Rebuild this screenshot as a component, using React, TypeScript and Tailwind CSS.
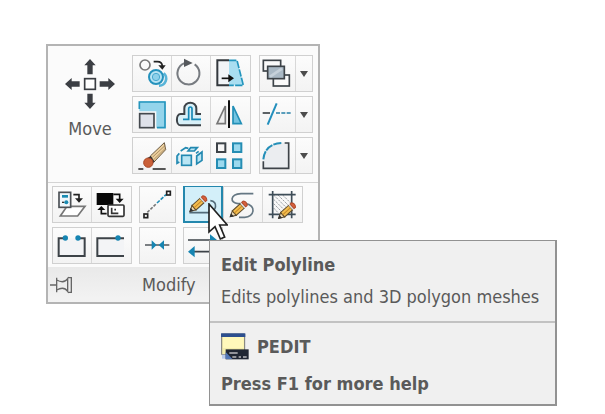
import React from 'react';

interface IconProps {
  children: React.ReactNode;
  narrow?: boolean;
}

// Tool glyphs are drawn on a 114x105 grid and shown at a third of that size.
const Glyph: React.FC<IconProps> = ({ children, narrow }) => (
  <svg
    viewBox={narrow ? '0 0 105 105' : '0 0 114 105'}
    className={narrow ? 'w-[35px] h-[35px] shrink-0' : 'w-[38px] h-[35px] shrink-0'}
    fill="none"
    stroke="#3d4348"
    strokeWidth="5"
    aria-hidden="true"
  >
    {children}
  </svg>
);

const Pencil: React.FC<{ x: number; y: number }> = ({ x, y }) => (
  <g transform={`translate(${x} ${y}) rotate(-42)`} stroke="#5d4a2c" strokeWidth="3">
    <path d="M0 0 16-9V9Z" fill="#f0dcb4" />
    <path d="M0 0 7-4V4Z" fill="#333" stroke="#333" />
    <path d="M16-9H48V9H16Z" fill="#f3bd4f" />
    <path d="M16 0H48" stroke="#c98a26" />
    <path d="M48-9H54V9H48Z" fill="#ddd" stroke="none" />
    <path d="M54-9H60Q67 0 60 9H54Z" fill="#d9603b" stroke="#b04a2c" />
  </g>
);

const MoveIcon = () => (
  <svg viewBox="0 0 150 150" className="w-[50px] h-[50px]" fill="#3b3e43" aria-hidden="true">
    <path d="M75 0 92 19H83V46H67V19H58Z" />
    <path d="M75 150 92 131H83V104H67V131H58Z" />
    <path d="M0 75 20 57V67H44V83H20V93Z" />
    <path d="M150 75 130 57V67H104V83H130V93Z" />
    <rect x="59" y="59" width="32" height="32" fill="#fff" stroke="#3b3e43" strokeWidth="5" />
  </svg>
);

const CopyIcon = () => (
  <Glyph>
    <circle cx="36" cy="27" r="15" stroke="#777" />
    <path d="M62 17H73Q88 17 88 32" stroke="#222" />
    <path d="M76 28H98L88 41Z" fill="#222" stroke="none" />
    <path d="M92 52A21 21 0 0 1 78 89" stroke="#58b4d8" strokeWidth="8" />
    <circle cx="69" cy="63" r="21" fill="#b9e4f4" stroke="#2592bd" strokeWidth="6" />
    <circle cx="69" cy="63" r="11" fill="#8dd0ea" stroke="#4aa9d0" strokeWidth="3" />
  </Glyph>
);

const RotateIcon = () => (
  <Glyph>
    <path d="M68 25A33 33 0 1 1 36 22L44 20" stroke="#777b80" strokeWidth="6" />
    <path d="M36 8 62 21 36 33Z" fill="#55585c" stroke="none" />
  </Glyph>
);

const StretchIcon = () => (
  <Glyph>
    <path d="M54 13H78L97 88H54Z" fill="#a9def1" stroke="none" />
    <path d="M54 13H78L97 88H54" stroke="#2395bd" strokeDasharray="22 4" />
    <path d="M54 13H19V88H54" fill="#f1f4f7" stroke="#33383d" strokeWidth="6" />
    <path d="M32 67H58" stroke="#111" />
    <path d="M52 55 69 67 52 79Z" fill="#111" stroke="none" />
  </Glyph>
);

const DrawOrderIcon = () => (
  <Glyph narrow>
    <rect x="10" y="13" width="52" height="32" fill="#fafafa" />
    <rect x="40" y="57" width="48" height="33" fill="#fafafa" />
    <rect x="23" y="31" width="50" height="37" fill="#aab9c5" />
    <path d="M30 62 66 38" stroke="#c6d1da" strokeWidth="8" />
  </Glyph>
);

const ScaleIcon = () => (
  <Glyph>
    <path d="M19 13H97V93H70V43H19Z" fill="#94d4eb" stroke="none" />
    <path d="M19 36V15H96V92H72" stroke="#2495bd" />
    <rect x="20" y="50" width="43" height="42" fill="#dfe2ea" stroke="#44494e" />
  </Glyph>
);

const OffsetIcon = () => (
  <Glyph>
    <path d="M87 51H73V34A18 17 0 0 0 37 34V51H26C11 51 11 85 26 85H87" fill="#d8f0f8" strokeWidth="6" />
    <path d="M87 67H60V36A5 6 0 0 0 50 36V67H33" stroke="#1688b5" />
  </Glyph>
);

const MirrorIcon = () => (
  <Glyph>
    <path d="M43 27V80H18Z" fill="#eee" stroke="#777" />
    <path d="M66 27V80H91Z" fill="#74c4e1" stroke="#218fb7" />
    <path d="M54 10V93" stroke="#111" strokeWidth="6" />
  </Glyph>
);

const TrimIcon = () => (
  <Glyph narrow>
    <path d="M8 48H30" />
    <path d="M48 48H92" stroke="#257fa6" strokeDasharray="12 4" />
    <path d="M50 19 23 83" stroke="#238fbd" strokeWidth="6" />
  </Glyph>
);

const EraseIcon = () => (
  <Glyph>
    <path d="M52 54 94 14 98 35 63 72Z" fill="#ebcf9e" stroke="#6b5a42" strokeWidth="3" />
    <path d="M58 58 97 22M61 66 97 31" stroke="#927347" strokeWidth="2" />
    <path d="M43 60 53 54 65 71 57 78Z" fill="#333" stroke="none" />
    <circle cx="46" cy="74" r="14" fill="#cb6139" stroke="#a84828" strokeWidth="3" />
    <path d="M16 93H31M59 93H98" stroke="#222" />
  </Glyph>
);

const ExplodeIcon = () => (
  <Glyph>
    <g fill="#b9e5f4" stroke="#2389b1" strokeWidth="5">
      <rect x="29" y="52" width="29" height="30" />
      <path d="M22 46 15 54V76L22 72" />
      <path d="M26 39 41 29 49 31M48 39 56 29H76L67 39Z" />
      <path d="M74 54 90 42V67L74 78Z" />
      <path d="M72 46 80 40" />
    </g>
  </Glyph>
);

const ArrayIcon = () => (
  <Glyph>
    <g strokeWidth="6">
      <rect x="18" y="16" width="25" height="26" fill="#f6f6f6" />
      <rect x="66" y="16" width="25" height="26" fill="#9cd9ee" stroke="#258db3" />
      <rect x="18" y="64" width="25" height="26" fill="#9cd9ee" stroke="#258db3" />
      <rect x="66" y="64" width="25" height="26" fill="#9cd9ee" stroke="#258db3" />
    </g>
  </Glyph>
);

const FilletIcon = () => (
  <Glyph narrow>
    <path d="M10 68Q18 16 62 14H86V91H10Z" fill="#ebedf0" stroke="none" />
    <path d="M10 70V91H86V15H74" />
    <path d="M10 64Q15 18 64 15" stroke="#248fb8" strokeWidth="6" strokeDasharray="25 3" />
  </Glyph>
);

const ByLayerIcon = () => (
  <Glyph>
    <path d="M42 58H96L74 87H22Z" fill="#fff" stroke="#777" />
    <rect x="18" y="16" width="35" height="45" fill="#f0f7fb" stroke="#4c5055" />
    <path d="M27 28H45" stroke="#198bb2" strokeWidth="8" />
    <path d="M27 46H34" stroke="#333" strokeWidth="4" />
    <circle cx="40" cy="46" r="6" fill="#198bb2" stroke="none" />
    <path d="M61 23H78V37" stroke="#222" />
    <path d="M66 34H90L78 47Z" fill="#222" stroke="none" />
  </Glyph>
);

const ChangeSpaceIcon = () => (
  <Glyph>
    <rect x="14" y="18" width="50" height="36" fill="#080808" stroke="none" />
    <path d="M64 22H83V38M28 66V80H44" stroke="#111" />
    <path d="M71 35H95L83 48ZM16 69 28 57 40 69Z" fill="#111" stroke="none" />
    <rect x="48" y="54" width="48" height="34" rx="3" fill="#fff" stroke="#333" />
    <path d="M59 62V79H79M67 68H72" stroke="#333" />
  </Glyph>
);

const LengthenIcon = () => (
  <Glyph narrow>
    <path d="M22 76 48 51" stroke="#777" strokeDasharray="9 4" />
    <path d="M51 48 78 23" stroke="#218db6" strokeDasharray="11 4" />
    <rect x="12" y="81" width="11" height="11" stroke="#222" />
    <rect x="80" y="13" width="11" height="11" stroke="#222" />
  </Glyph>
);

const EditPolylineIcon = () => (
  <Glyph>
    <path d="M13 77H71C94 77 101 43 76 41" stroke="#526b79" />
    <Pencil x={15} y={73} />
  </Glyph>
);

const EditSplineIcon = () => (
  <Glyph>
    <path d="M88 20H51C17 22 17 48 42 50H64C99 54 91 91 62 91H45" stroke="#657783" />
    <Pencil x={19} y={89} />
  </Glyph>
);

const EditHatchIcon = () => (
  <Glyph>
    <path d="M32 24 80 72M32 37 73 78M32 50 60 78M32 63 46 78M45 24 82 61M59 24 84 49" stroke="#9ba0a5" strokeWidth="3" strokeDasharray="7 3" />
    <path d="M29 12V94M86 12V94M17 23H98M17 82H98" stroke="#3e4d58" />
    <Pencil x={47} y={94} />
  </Glyph>
);

const BreakIcon = () => (
  <Glyph>
    <path d="M37 31H17V84H95V31H75" fill="#f3f4f6" strokeWidth="6" />
    <circle cx="37" cy="30" r="8" fill="#1785b2" stroke="none" />
    <circle cx="75" cy="30" r="8" fill="#1785b2" stroke="none" />
  </Glyph>
);

const BreakAtPointIcon = () => (
  <Glyph>
    <path d="M96 31H16V84H96" fill="#f3f4f6" strokeWidth="6" />
    <circle cx="78" cy="30" r="8" fill="#1785b2" stroke="none" />
  </Glyph>
);

const JoinIcon = () => (
  <Glyph narrow>
    <path d="M15 51H88" strokeWidth="4" />
    <path d="M35 37 50 51 35 65ZM72 37 56 51 72 65Z" fill="#1785b2" stroke="none" />
  </Glyph>
);

const ReverseIcon = () => (
  <Glyph>
    <path d="M12 36H82M28 71H98" />
    <path d="M12 71 32 54V88ZM99 36 78 19V53Z" fill="#1785b2" stroke="none" />
  </Glyph>
);

const PinIcon = () => (
  <svg viewBox="0 0 69 54" className="w-[23px] h-[18px]" fill="none" stroke="#666" strokeWidth="4" aria-hidden="true">
    <path d="M0 27H19M20 5V49M20 12Q42 24 53 8V46Q42 30 20 42M53 5H64V49H53" />
  </svg>
);

interface Tool {
  label: string;
  icon: React.FC;
}

const mainRows: { tools: Tool[]; menu: Tool }[] = [
  {
    tools: [
      { label: 'Copy', icon: CopyIcon },
      { label: 'Rotate', icon: RotateIcon },
      { label: 'Stretch', icon: StretchIcon },
    ],
    menu: { label: 'Draw Order', icon: DrawOrderIcon },
  },
  {
    tools: [
      { label: 'Scale', icon: ScaleIcon },
      { label: 'Offset', icon: OffsetIcon },
      { label: 'Mirror', icon: MirrorIcon },
    ],
    menu: { label: 'Trim', icon: TrimIcon },
  },
  {
    tools: [
      { label: 'Erase', icon: EraseIcon },
      { label: 'Explode', icon: ExplodeIcon },
      { label: 'Array', icon: ArrayIcon },
    ],
    menu: { label: 'Fillet', icon: FilletIcon },
  },
];

const ToolGroup: React.FC<{ children: React.ReactNode }> = ({ children }) => (
  <div className="flex h-[37px] border border-[#d0d0d0] divide-x divide-[#d8d8d8] bg-gradient-to-b from-[#fcfcfc] to-[#f3f3f3]">
    {children}
  </div>
);

const ToolButton: React.FC<{ tool: Tool; className?: string }> = ({ tool, className = 'w-10' }) => (
  <button type="button" aria-label={tool.label} className={`flex items-center ${className}`}>
    <tool.icon />
  </button>
);

const Cursor = () => (
  <svg viewBox="0 0 60 117" className="absolute left-[25px] top-[17px] w-5 h-[39px] pointer-events-none" aria-hidden="true">
    <path d="M3 3V87L21 71L37 108L50 102L35 66H58Z" fill="#fff" stroke="#222" strokeWidth="5" />
  </svg>
);

const Tooltip = () => (
  <div
    id="pedit-tip"
    role="tooltip"
    className="absolute left-[26px] top-[54px] w-max border border-r-2 border-b-2 border-[#929292] bg-[#f0f0f0] pt-3 pb-2 text-left leading-6"
  >
    <p className="pl-[11px] pr-4 font-bold">Edit Polyline</p>
    <p className="pl-[11px] pr-4 mt-2">Edits polylines and 3D polygon meshes</p>
    <hr className="mt-3 border-t-2 border-[#c2c2c2]" />
    <p className="pl-[11px] pr-4 mt-2.5 flex items-center gap-2 font-bold">
      <svg viewBox="0 0 84 81" className="w-7 h-[27px]" aria-hidden="true">
        <path d="M2 3H71V65H2Z" fill="#f4edac" stroke="#777" strokeWidth="3" />
        <path d="M6 12H68V45H6Z" fill="#fff8ba" />
        <path d="M0 1H73V12H0Z" fill="#2d4f8e" />
        <path d="M3 65H15V77H3Z" fill="#b9cbed" />
        <path d="M14 49H83V79H14Z" fill="#202633" />
        <path d="M14 57 34 78H14Z" fill="#5277b7" />
        <path d="M25 60H50M34 72H46M53 72H60M66 72H77" stroke="#b8b8bd" strokeWidth="5" />
      </svg>
      PEDIT
    </p>
    <p className="pl-[11px] pr-4 mt-3 font-bold">Press F1 for more help</p>
  </div>
);

const App: React.FC = () => {
  return (
    <main className="min-h-screen bg-white pl-[46px] pt-[44px] font-['DejaVu_Sans_Condensed','Noto_Sans',sans-serif] text-[18px] text-[#5a5a5a]">
      <section aria-label="Modify" className="w-fit border-2 border-[#b4b4b4] bg-[#fbfbfb]">
        <div className="flex pt-[9px] pr-[5px] pb-2">
          <button type="button" className="flex w-[84px] flex-col items-center pt-1 leading-6">
            <MoveIcon />
            <span className="mt-2">Move</span>
          </button>
          <div className="flex flex-col gap-1">
            {mainRows.map(row => (
              <div key={row.menu.label} className="flex gap-2">
                <ToolGroup>
                  {row.tools.map(tool => (
                    <ToolButton key={tool.label} tool={tool} className="w-[39px]" />
                  ))}
                </ToolGroup>
                <ToolGroup>
                  <ToolButton tool={row.menu} className="w-9" />
                  <button type="button" aria-label={`${row.menu.label} options`} className="flex w-4 items-center justify-center">
                    <svg viewBox="0 0 8 6" className="w-2 h-1.5" fill="#4c4c4c" aria-hidden="true">
                      <path d="M0 0H8L4 6Z" />
                    </svg>
                  </button>
                </ToolGroup>
              </div>
            ))}
          </div>
        </div>

        {/* Expanded part of the panel */}
        <div className="flex flex-col gap-1 border-t border-[#d4d4d4] pt-[3px] pb-[3px] pl-1">
          <div className="relative z-10 flex gap-[7px]">
            <ToolGroup>
              <ToolButton tool={{ label: 'Set to ByLayer', icon: ByLayerIcon }} className="w-[39px]" />
              <ToolButton tool={{ label: 'Change Space', icon: ChangeSpaceIcon }} className="w-[39px]" />
            </ToolGroup>
            <ToolGroup>
              <ToolButton tool={{ label: 'Lengthen', icon: LengthenIcon }} className="w-[35px]" />
            </ToolGroup>
            <div className="relative flex h-[37px]">
              <button
                type="button"
                aria-label="Edit Polyline"
                aria-describedby="pedit-tip"
                className="flex w-10 items-center border-2 border-t border-[#2387ad] bg-[#d3eff9]"
              >
                <EditPolylineIcon />
              </button>
              <ToolGroup>
                <ToolButton tool={{ label: 'Edit Spline', icon: EditSplineIcon }} className="w-[39px]" />
                <ToolButton tool={{ label: 'Edit Hatch', icon: EditHatchIcon }} className="w-[39px]" />
              </ToolGroup>
              <Cursor />
              <Tooltip />
            </div>
          </div>
          <div className="flex gap-[7px]">
            <ToolGroup>
              <ToolButton tool={{ label: 'Break', icon: BreakIcon }} className="w-[39px]" />
              <ToolButton tool={{ label: 'Break at Point', icon: BreakAtPointIcon }} className="w-[39px]" />
            </ToolGroup>
            <ToolGroup>
              <ToolButton tool={{ label: 'Join', icon: JoinIcon }} className="w-[35px]" />
            </ToolGroup>
            <ToolGroup>
              <ToolButton tool={{ label: 'Reverse', icon: ReverseIcon }} className="w-[38px]" />
            </ToolGroup>
          </div>
        </div>

        <footer className="flex h-[35px] items-center bg-gradient-to-b from-[#e9e9e9] to-[#f3f3f3] pl-[2px]">
          <button type="button" aria-label="Pin panel">
            <PinIcon />
          </button>
          <h2 className="pl-[69px]">Modify</h2>
        </footer>
      </section>
    </main>
  );
};

export default App;
